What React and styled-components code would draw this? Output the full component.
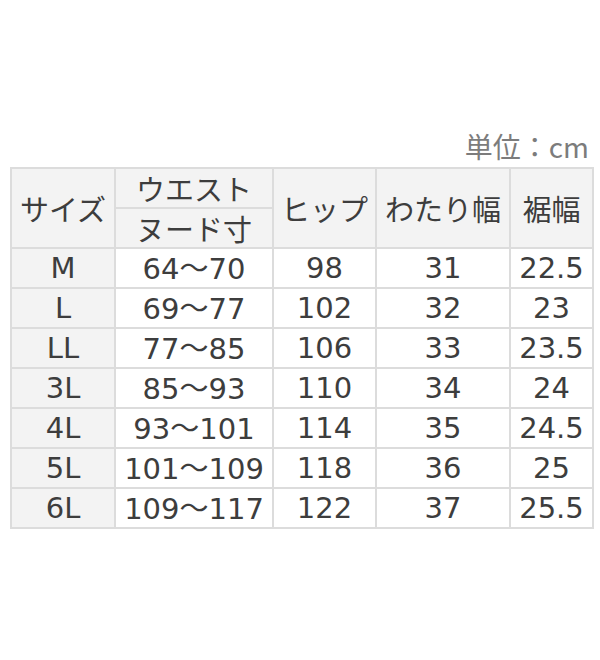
import React from "react";
import styled, { createGlobalStyle } from "styled-components";

const GlobalStyle = createGlobalStyle`
  html, body {
    margin: 0;
    padding: 0;
    background: #ffffff;
  }
`;

const Page = styled.div`
  width: 600px;
  height: 660px;
  box-sizing: border-box;
  padding: 129px 8px 0 10px;
  font-family: "DejaVu Sans", "Noto Sans CJK JP", sans-serif;
  color: #3d3d3d;
`;

const Unit = styled.div`
  text-align: right;
  font-family: "Noto Sans CJK JP", sans-serif;
  font-size: 28px;
  line-height: 34px;
  color: #7c7c7c;
  padding-right: 3px;
  margin-bottom: 4px;
`;

const Table = styled.table`
  width: 582px;
  border-collapse: collapse;
  table-layout: fixed;
  border: 2px solid #d6d6d6;
`;

const Cell = styled.td`
  border: 2px solid #dcdcdc;
  padding: 0;
  height: 38px;
  text-align: center;
  vertical-align: middle;
  font-size: 29px;
  line-height: 1;
  background: ${(p) => (p.shaded ? "#f3f3f3" : "#ffffff")};
`;

const HeadCell = styled(Cell).attrs({ as: "th" })`
  font-weight: normal;
  font-family: "Noto Sans CJK JP", sans-serif;
  font-size: 29px;
  background: #f3f3f3;
`;

const Tilde = styled.span`
  font-family: "Noto Sans CJK JP", sans-serif;
`;

const rows = [
  ["M", "64", "70", "98", "31", "22.5"],
  ["L", "69", "77", "102", "32", "23"],
  ["LL", "77", "85", "106", "33", "23.5"],
  ["3L", "85", "93", "110", "34", "24"],
  ["4L", "93", "101", "114", "35", "24.5"],
  ["5L", "101", "109", "118", "36", "25"],
  ["6L", "109", "117", "122", "37", "25.5"],
];

export default function App() {
  return (
    <Page>
      <GlobalStyle />
      <Unit>単位：cm</Unit>
      <Table>
        <colgroup>
          <col style={{ width: "104px" }} />
          <col style={{ width: "158px" }} />
          <col style={{ width: "103px" }} />
          <col style={{ width: "134px" }} />
          <col style={{ width: "83px" }} />
        </colgroup>
        <thead>
          <tr>
            <HeadCell rowSpan={2}>サイズ</HeadCell>
            <HeadCell>ウエスト</HeadCell>
            <HeadCell rowSpan={2}>ヒップ</HeadCell>
            <HeadCell rowSpan={2}>わたり幅</HeadCell>
            <HeadCell rowSpan={2}>裾幅</HeadCell>
          </tr>
          <tr>
            <HeadCell>ヌード寸</HeadCell>
          </tr>
        </thead>
        <tbody>
          {rows.map(([size, from, to, hip, thigh, hem]) => (
            <tr key={size}>
              <Cell shaded>{size}</Cell>
              <Cell>
                {from}
                <Tilde>～</Tilde>
                {to}
              </Cell>
              <Cell>{hip}</Cell>
              <Cell>{thigh}</Cell>
              <Cell>{hem}</Cell>
            </tr>
          ))}
        </tbody>
      </Table>
    </Page>
  );
}
